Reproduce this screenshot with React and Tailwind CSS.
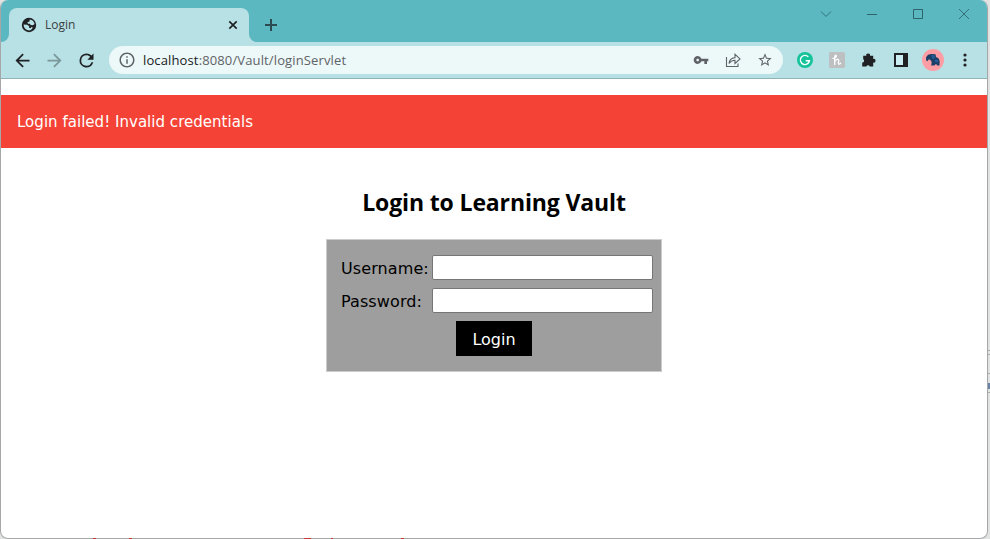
import React from "react";

const UI = "font-['Open_Sans','Noto_Sans',sans-serif]";
const BODY = "font-['DejaVu_Sans',Verdana,sans-serif]";

function Glyph({ d, size = "size-[21px]", color = "text-[#202124]" }) {
  return (
    <svg viewBox="0 0 24 24" className={`${size} ${color} shrink-0`} fill="currentColor">
      <path d={d} />
    </svg>
  );
}

function Cell({ children }) {
  return <div className="flex w-8 shrink-0 items-center justify-center">{children}</div>;
}

function TabStrip() {
  return (
    <div className="flex h-[42px] items-end bg-[#5bb8c1]">
      <svg className="h-2 w-2 shrink-0" viewBox="0 0 8 8" fill="#b7e1e4">
        <path d="M8 0v8H0a8 8 0 0 0 8-8z" />
      </svg>
      <div className="flex h-[34px] w-60 shrink-0 items-center rounded-t-lg bg-[#b7e1e4] pl-3 pr-[9px]">
        <svg className="size-4 shrink-0" viewBox="0 0 16 16">
          <circle cx="8" cy="8" r="7.200" fill="#202124" />
          <path
            d="M2.600 7.600l3.600.1 2 1.600-.2 1.500 1.500.5 1-1.200 1.300.4C10.800 12.800 9 13.700 7 13.300 4.200 12.800 2.600 10.500 2.600 7.600zM8.700 2.500c2.500.3 4.300 1.800 4.900 4.400L12 8.300l-2.300-.2-.9-1.400H6.900l-.5-1.400 2.100-.7z"
            fill="#b7e1e4"
          />
        </svg>
        <span className={`ml-2 text-[12px] leading-4 text-[#3c4043] ${UI}`}>Login</span>
        <svg className="ml-auto size-[14px]" viewBox="0 0 14 14" stroke="#202124" strokeWidth="1.700">
          <path d="M3.300 3.300l7.400 7.400M10.700 3.300l-7.400 7.400" />
        </svg>
      </div>
      <svg className="h-2 w-2 shrink-0" viewBox="0 0 8 8" fill="#b7e1e4">
        <path d="M0 0v8h8a8 8 0 0 1-8-8z" />
      </svg>
      <svg className="mb-[10px] ml-[7px] size-[14px]" viewBox="0 0 14 14" stroke="#2b4b50" strokeWidth="2">
        <path d="M7 1v12M1 7h12" />
      </svg>
      <div className="ml-auto flex h-[29px] self-start">
        <svg className="h-[29px] w-[46px]" viewBox="0 0 46 29" fill="none" stroke="#347078">
          <path d="M18 11.500l5 5 5-5" />
        </svg>
        <svg className="h-[29px] w-[46px]" viewBox="0 0 46 29" fill="none" stroke="#2d636a">
          <path d="M18 14.500h10" />
        </svg>
        <svg className="h-[29px] w-[46px]" viewBox="0 0 46 29" fill="none" stroke="#2d636a">
          <path d="M18.500 9.500h9v9h-9z" />
        </svg>
        <svg className="h-[29px] w-[46px]" viewBox="0 0 46 29" fill="none" stroke="#347078">
          <path d="M18 9l10 10M28 9l-10 10" />
        </svg>
      </div>
    </div>
  );
}

function Toolbar() {
  return (
    <div className="flex h-[37px] items-center border-b border-[#8fb3b7] bg-[#b7e1e4] pl-[5px] pr-[6px]">
      <Cell>
        <Glyph d="M20 11H7.830l5.590-5.590L12 4l-8 8 8 8 1.410-1.410L7.830 13H20v-2z" />
      </Cell>
      <Cell>
        <Glyph color="text-[#7b9799]" d="M12 4l-1.410 1.410L16.170 11H4v2h12.170l-5.580 5.590L12 20l8-8z" />
      </Cell>
      <Cell>
        <Glyph d="M17.650 6.350A7.950 7.950 0 0 0 12 4a8 8 0 1 0 7.730 10h-2.080A6 6 0 1 1 12 6c1.660 0 3.140.69 4.220 1.780L13 11h7V4l-2.350 2.350z" />
      </Cell>
      <div className="ml-[7px] flex h-7 w-[674px] shrink-0 items-center rounded-full bg-[#edf8f9] pl-[9px] pr-[2px]">
        <Glyph
          size="size-[18px]"
          color="text-[#5f6368]"
          d="M11 7h2v2h-2zm0 4h2v6h-2zm1-9C6.480 2 2 6.480 2 12s4.480 10 10 10 10-4.480 10-10S17.520 2 12 2zm0 18c-4.410 0-8-3.590-8-8s3.590-8 8-8 8 3.590 8 8-3.590 8-8 8z"
        />
        <span className={`ml-[7px] text-[13px] leading-5 tracking-[0.130px] text-[#5f6368] ${UI}`}>
          <span className="text-[#202124]">localhost</span>:8080/Vault/loginServlet
        </span>
        <div className="ml-auto flex">
          <Cell>
            <Glyph
              size="size-4"
              color="text-[#5f6368]"
              d="M12.650 10A5.990 5.990 0 0 0 7 6c-3.310 0-6 2.690-6 6s2.690 6 6 6a5.990 5.990 0 0 0 5.650-4H17v4h4v-4h2v-4H12.650zM7 14c-1.100 0-2-.9-2-2s.9-2 2-2 2 .9 2 2-.9 2-2 2z"
            />
          </Cell>
          <Cell>
            <svg className="size-4" viewBox="0 0 16 16" fill="none" stroke="#5f6368" strokeWidth="1.100">
              <path d="M1.500 5v9.500h11.500V11.500" />
              <path d="M4 11.500c.4-3.600 2.300-5.500 6-5.900V2.300l5 4.600-5 4.600V8.300c-2.700.1-4.500 1-6 3.200z" />
            </svg>
          </Cell>
          <Cell>
            <Glyph
              size="size-4"
              color="text-[#5f6368]"
              d="M22 9.240l-7.190-.62L12 2 9.190 8.630 2 9.240l5.460 4.730L5.820 21 12 17.270 18.180 21l-1.630-7.030L22 9.240zM12 15.400l-3.760 2.270 1-4.280-3.320-2.880 4.380-.38L12 6.100l1.710 4.040 4.380.38-3.320 2.880 1 4.280L12 15.400z"
            />
          </Cell>
        </div>
      </div>
      <div className="ml-[6px] flex">
        <Cell>
          <svg className="size-4" viewBox="0 0 16 16" fill="none">
            <circle cx="8" cy="8" r="8" fill="#15c39a" />
            <path d="M11.300 4.800A4.600 4.600 0 1 0 12.500 8.700H8.700M12.500 8.700l-1.200 2.500" stroke="#fff" strokeWidth="1.400" />
          </svg>
        </Cell>
        <Cell>
          <svg className="size-4" viewBox="0 0 16 16" fill="none">
            <rect width="16" height="16" rx="1.500" fill="#bdbfc0" />
            <path
              d="M4 6.300C5.600 6 7.400 4.800 7.300 3.700 7.200 2.700 5.700 3.200 5.700 5V12.500M5.700 9.600C6.600 7 9.900 6.300 9.700 8.600L9.400 10.800c-.1 1.900 1.500 1.700 2.300.4"
              stroke="#fff"
              strokeWidth="1.300"
              strokeLinecap="round"
            />
          </svg>
        </Cell>
        <Cell>
          <svg className="size-4" viewBox="0 0 16 16" fill="#202124">
            <path d="M2.200 3.800h3.100a1.900 1.900 0 1 1 3.700 0h3.200v3.100a1.900 1.900 0 1 1 0 3.700v3.900H8.700a1.700 1.700 0 0 0-3.300 0H1.200v-4a1.700 1.700 0 0 0 1-3.200z" />
          </svg>
        </Cell>
        <Cell>
          <svg className="size-[14px]" viewBox="0 0 14 14">
            <path fill="#202124" d="M0 0h14v14H0z" />
            <path fill="#c9edf0" d="M2 2h7v10H2z" />
          </svg>
        </Cell>
        <Cell>
          <svg className="size-[22px]" viewBox="0 0 22 22">
            <circle cx="11" cy="11" r="11" fill="#ff9da4" />
            <path
              d="M4 8.300L6 5.800 9 5l4.500.3L14 8l2.500 1.300 1.200 3-.2 4.200h-2.500l-.5-1.300-1.500.2-.4 1.100H9.200l.5-3.500L8 10.500l-1.800.2-.5 1.500-1.500-.7z"
              fill="#1b3f66"
            />
            <path d="M9.500 6l3.300.5v3l-2.600.2zM12.500 11l3-.6.8 2.500-2.800.7z" fill="#245d98" />
          </svg>
        </Cell>
        <Cell>
          <svg className="h-[14px] w-1" viewBox="0 0 4 14" fill="#202124">
            <circle cx="2" cy="2" r="1.600" />
            <circle cx="2" cy="7" r="1.600" />
            <circle cx="2" cy="12" r="1.600" />
          </svg>
        </Cell>
      </div>
    </div>
  );
}

function Field({ label, type }) {
  return (
    <label className="flex h-[25px] items-center">
      <span className="w-[91px] shrink-0 whitespace-nowrap pt-[2px] text-[16px] tracking-[0.100px] text-black">
        {label}
      </span>
      <input
        type={type}
        className="h-[25px] w-[221px] rounded-[2px] border border-[#767676] bg-white px-1 outline-none"
      />
    </label>
  );
}

export default function App() {
  return (
    <div className="relative h-[539px] w-[990px] overflow-hidden bg-[#e1e2e2] pr-[2px]">
      <div className="flex h-[539px] w-[988px] flex-col overflow-hidden rounded-lg border-x border-b border-[#a6a7a8] bg-white">
        <TabStrip />
        <Toolbar />
        <main className={`flex flex-col items-center ${BODY}`}>
          <div className="mt-4 flex h-[53px] w-full items-center bg-[#f44336] pl-4 pt-[2px] text-[15px] tracking-[0.030px] text-white">
            <span>Login failed! Invalid credentials</span>
          </div>
          <h2
            className={`mt-[36px] whitespace-nowrap text-[23px] font-bold leading-9 tracking-[-0.130px] text-black ${UI}`}
          >
            Login to Learning Vault
          </h2>
          <form
            className="mt-[19px] flex h-[133px] w-[336px] flex-col border border-[#cccccc] bg-[#9e9e9e] pl-[14px] pt-[15px]"
            onSubmit={(e) => e.preventDefault()}
          >
            <Field label="Username:" type="text" />
            <div className="h-2" />
            <Field label="Password:" type="password" />
            <button className="ml-[115px] mt-2 h-[35px] w-[76px] bg-black pt-[2px] text-[16px] text-white">
              Login
            </button>
          </form>
        </main>
      </div>
      <div className="absolute right-0 top-[350px] h-[5px] w-[2px] border-y border-[#a9abad]" />
      <div className="absolute right-0 top-[373px] h-5 w-[2px] border-y border-[#a9abad]" />
      <div className="absolute right-0 top-[383px] h-[6px] w-[2px] bg-[#6882a8]" />
      <div className="absolute bottom-0 left-[93px] h-px w-[3px] bg-[#c93636]" />
      <div className="absolute bottom-0 left-[129px] h-px w-[3px] bg-[#c93636]" />
      <div className="absolute bottom-0 left-[304px] h-px w-[7px] bg-[#c93636]" />
      <div className="absolute bottom-0 left-[331px] h-px w-[2px] bg-[#c93636]" />
      <div className="absolute bottom-0 left-[401px] h-px w-[3px] bg-[#c93636]" />
    </div>
  );
}
